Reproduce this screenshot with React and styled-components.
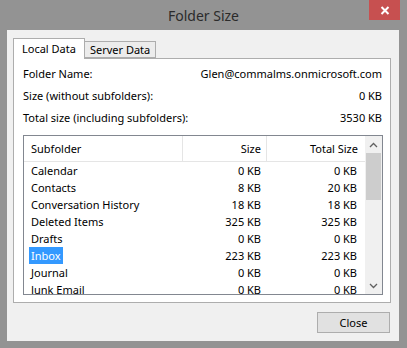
import React from "react";
import styled, { createGlobalStyle } from "styled-components";

const GlobalStyle = createGlobalStyle`
  html, body { margin: 0; padding: 0; }
  body { font-family: "Noto Sans", "DejaVu Sans", sans-serif; }
`;

const Frame = styled.div`
  width: 407px;
  height: 348px;
  background: #939393;
  display: flex;
  flex-direction: column;
  box-sizing: border-box;
`;

const TitleBar = styled.div`
  height: 30px;
  display: grid;
  grid-template-columns: 1fr auto 1fr;
  align-items: start;
`;

const Title = styled.div`
  grid-column: 2;
  padding-top: 6px;
  font-size: 14px;
  color: #2b2b2b;
`;

const CloseX = styled.div`
  grid-column: 3;
  justify-self: end;
  margin-right: 7px;
  width: 31px;
  height: 20px;
  background: #c75050;
  display: flex;
  align-items: center;
  justify-content: center;
`;

const Client = styled.div`
  flex: 1;
  margin: 0 8px 7px 7px;
  background: #f0f0f0;
  padding: 8px 8px 0 6px;
  display: flex;
  flex-direction: column;
`;

const Tabs = styled.div`
  display: flex;
  align-items: flex-end;
  height: 20px;
  position: relative;
  z-index: 1;
`;

const Tab = styled.div`
  box-sizing: border-box;
  height: ${(p) => (p.active ? "21px" : "17px")};
  padding: 0 ${(p) => (p.active ? "8px" : "5px")};
  margin-bottom: ${(p) => (p.active ? "-1px" : "0")};
  background: ${(p) => (p.active ? "#ffffff" : "#ececec")};
  border: 1px solid #adadad;
  border-bottom: ${(p) => (p.active ? "none" : "1px solid #adadad")};
  border-left: ${(p) => (p.first ? "1px solid #adadad" : "none")};
  font-size: 11px;
  line-height: ${(p) => (p.active ? "19px" : "15px")};
  color: #000;
  white-space: nowrap;
`;

const Panel = styled.div`
  box-sizing: border-box;
  height: 245px;
  background: #ffffff;
  border: 1px solid #adadad;
  padding: 7px 8px 0 9px;
`;

const InfoRow = styled.div`
  display: flex;
  justify-content: space-between;
  height: 22px;
  font-size: 11px;
  line-height: 16px;
  color: #000;
`;

const ListBox = styled.div`
  margin-top: 3px;
  width: 360px;
  height: 160px;
  box-sizing: border-box;
  border: 1px solid #828790;
  display: flex;
  overflow: hidden;
`;

const ListBody = styled.div`
  flex: 1;
  overflow: hidden;
`;

const Row = styled.div`
  display: grid;
  grid-template-columns: 159px 84px 98px;
  height: ${(p) => (p.header ? "25px" : "17px")};
  align-items: center;
  font-size: 11px;
  color: #000;
  border-bottom: ${(p) => (p.header ? "1px solid #e5e5e5" : "none")};
`;

const Cell = styled.div`
  box-sizing: border-box;
  height: 100%;
  display: flex;
  align-items: center;
  justify-content: ${(p) => (p.right ? "flex-end" : "flex-start")};
  padding: ${(p) => (p.right ? `0 ${p.pr}px 0 0` : "0 0 0 5px")};
  border-right: ${(p) => (p.sep ? "1px solid #e5e5e5" : "none")};
  white-space: nowrap;
`;

const Name = styled.span`
  padding: 0 2px;
  height: 17px;
  line-height: 17px;
  background: ${(p) => (p.selected ? "#3399ff" : "transparent")};
  color: ${(p) => (p.selected ? "#ffffff" : "#000")};
`;

const ScrollBar = styled.div`
  width: 17px;
  background: #f0f0f0;
  display: flex;
  flex-direction: column;
  align-items: center;
`;

const Arrow = styled.div`
  height: 17px;
  display: flex;
  align-items: center;
  justify-content: center;
`;

const Thumb = styled.div`
  width: 15px;
  height: 47px;
  background: #cdcdcd;
`;

const Track = styled.div`
  flex: 1;
`;

const Footer = styled.div`
  display: flex;
  justify-content: flex-end;
  padding: 9px 0 0;
  margin-right: 1px;
`;

const Button = styled.div`
  width: 73px;
  height: 21px;
  box-sizing: border-box;
  border: 1px solid #adadad;
  background: #e1e1e1;
  font-size: 11px;
  line-height: 19px;
  text-align: center;
  color: #000;
`;

const rows = [
  ["Calendar", "0 KB", "0 KB"],
  ["Contacts", "8 KB", "20 KB"],
  ["Conversation History", "18 KB", "18 KB"],
  ["Deleted Items", "325 KB", "325 KB"],
  ["Drafts", "0 KB", "0 KB"],
  ["Inbox", "223 KB", "223 KB"],
  ["Journal", "0 KB", "0 KB"],
  ["Junk Email", "0 KB", "0 KB"],
];

function Chevron({ up }) {
  return (
    <svg width="9" height="6" viewBox="0 0 9 6">
      <path
        d={up ? "M1 5 L4.5 1.5 L8 5" : "M1 1 L4.5 4.5 L8 1"}
        fill="none"
        stroke="#606060"
        strokeWidth="1.3"
      />
    </svg>
  );
}

export default function App() {
  return (
    <>
      <GlobalStyle />
      <Frame>
        <TitleBar>
          <Title>Folder Size</Title>
          <CloseX>
            <svg width="10" height="9" viewBox="0 0 10 9">
              <path d="M1.5 1 L8.5 8 M8.5 1 L1.5 8" stroke="#fff" strokeWidth="2" />
            </svg>
          </CloseX>
        </TitleBar>
        <Client>
          <Tabs>
            <Tab active first>Local Data</Tab>
            <Tab>Server Data</Tab>
          </Tabs>
          <Panel>
            <InfoRow>
              <span>Folder Name:</span>
              <span>Glen@commalms.onmicrosoft.com</span>
            </InfoRow>
            <InfoRow>
              <span>Size (without subfolders):</span>
              <span>0 KB</span>
            </InfoRow>
            <InfoRow>
              <span>Total size (including subfolders):</span>
              <span>3530 KB</span>
            </InfoRow>
            <ListBox>
              <ListBody>
                <Row header>
                  <Cell sep>
                    <Name>Subfolder</Name>
                  </Cell>
                  <Cell right pr={5} sep>
                    Size
                  </Cell>
                  <Cell right pr={7}>
                    Total Size
                  </Cell>
                </Row>
                {rows.map(([name, size, total]) => (
                  <Row key={name}>
                    <Cell>
                      <Name selected={name === "Inbox"}>{name}</Name>
                    </Cell>
                    <Cell right pr={6}>
                      {size}
                    </Cell>
                    <Cell right pr={8}>
                      {total}
                    </Cell>
                  </Row>
                ))}
              </ListBody>
              <ScrollBar>
                <Arrow>
                  <Chevron up />
                </Arrow>
                <Thumb />
                <Track />
                <Arrow>
                  <Chevron />
                </Arrow>
              </ScrollBar>
            </ListBox>
          </Panel>
          <Footer>
            <Button>Close</Button>
          </Footer>
        </Client>
      </Frame>
    </>
  );
}
